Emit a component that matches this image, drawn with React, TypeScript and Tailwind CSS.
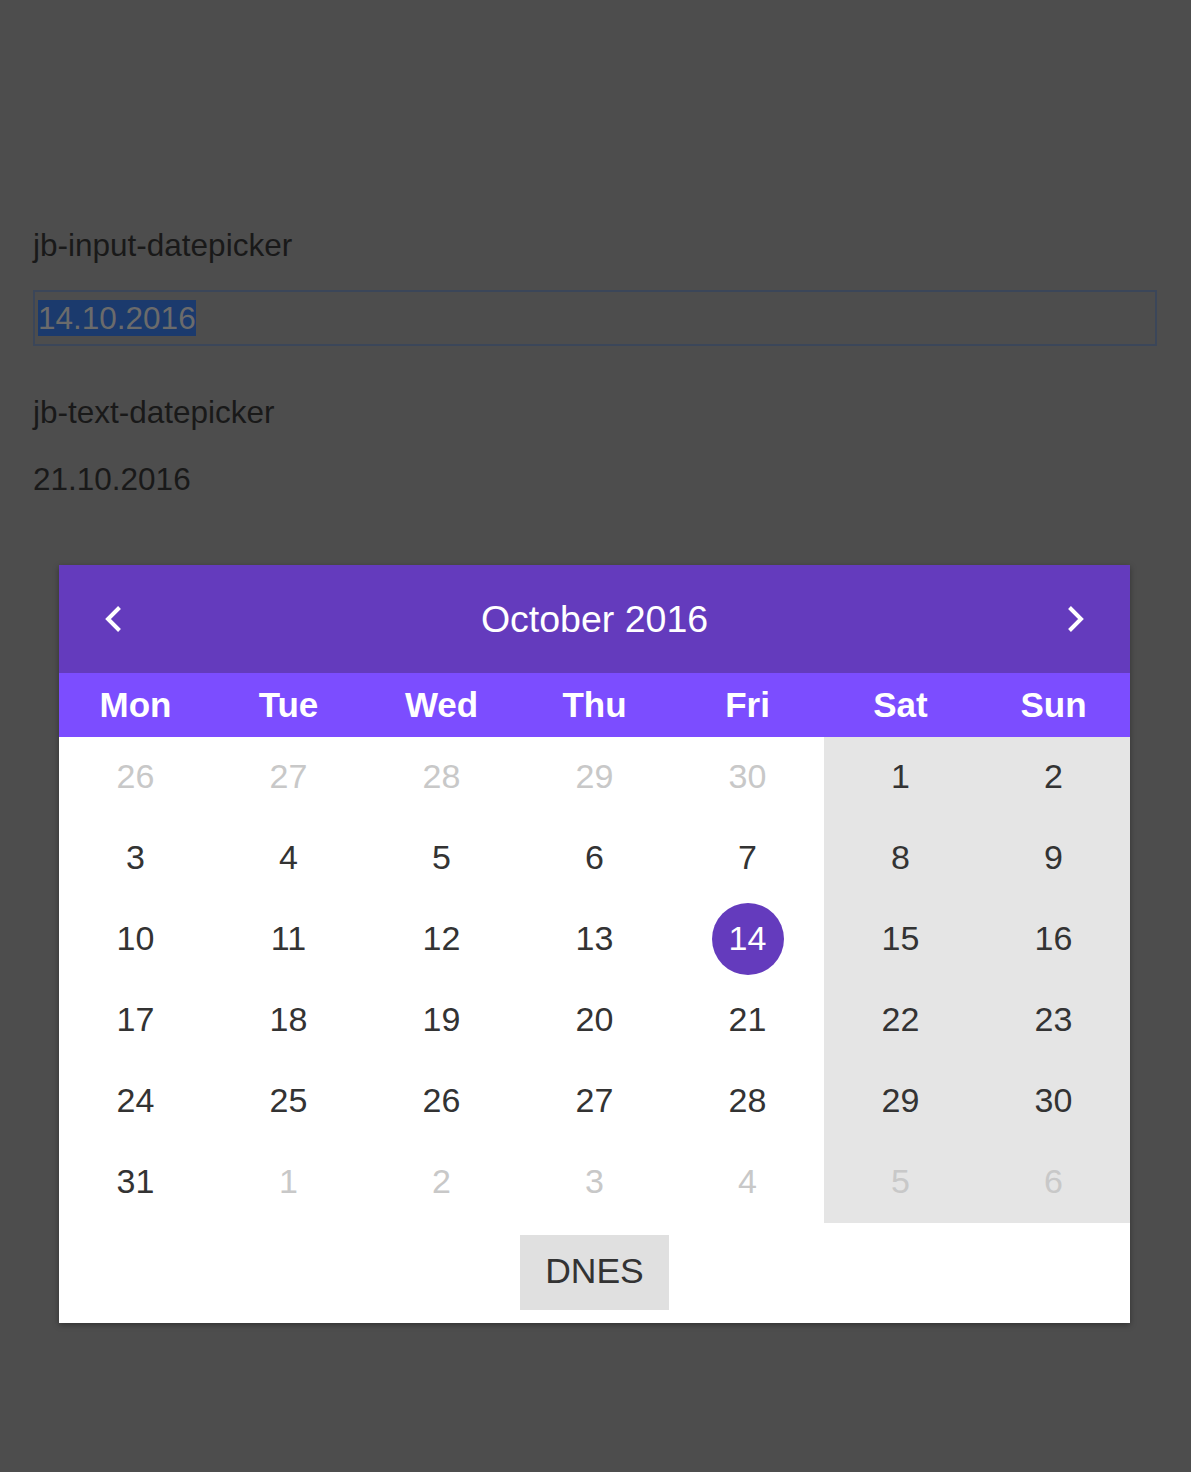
import React from "react";

const DAYS = ["Mon", "Tue", "Wed", "Thu", "Fri", "Sat", "Sun"];

type Cell = { d: number; other?: boolean };

const WEEKS: Cell[][] = [
  [{ d: 26, other: true }, { d: 27, other: true }, { d: 28, other: true }, { d: 29, other: true }, { d: 30, other: true }, { d: 1 }, { d: 2 }],
  [3, 4, 5, 6, 7, 8, 9].map((d) => ({ d })),
  [10, 11, 12, 13, 14, 15, 16].map((d) => ({ d })),
  [17, 18, 19, 20, 21, 22, 23].map((d) => ({ d })),
  [24, 25, 26, 27, 28, 29, 30].map((d) => ({ d })),
  [{ d: 31 }, { d: 1, other: true }, { d: 2, other: true }, { d: 3, other: true }, { d: 4, other: true }, { d: 5, other: true }, { d: 6, other: true }],
];

function Chevron({ dir }: { dir: "left" | "right" }) {
  return (
    <svg width="20" height="30" viewBox="0 0 20 30" fill="none">
      <path
        d={dir === "left" ? "M16.5 3.5 L5 15 L16.5 26.5" : "M3.5 3.5 L15 15 L3.5 26.5"}
        stroke="white"
        strokeWidth="4"
        strokeLinecap="butt"
        strokeLinejoin="miter"
      />
    </svg>
  );
}

export default function App() {
  const font = { fontFamily: '"Liberation Sans", Arial, sans-serif' };

  return (
    <div className="min-h-[1472px] w-full bg-[#4d4d4d] text-[31.5px] text-[#191919]" style={font}>
      <div className="px-[33px] pt-[227px]">
        <div className="leading-[36px]">jb-input-datepicker</div>
        <div className="mt-[27px] flex h-[56px] w-[1124px] items-center border-2 border-[#3b4659] pl-[3px]">
          <span className="bg-[#1b3a6d] leading-[36px] text-[#6b6b6b]">14.10.2016</span>
        </div>
        <div className="mt-[48px] leading-[36px]">jb-text-datepicker</div>
        <div className="mt-[31px] leading-[36px]">21.10.2016</div>
      </div>

      <div className="ml-[59px] mt-[68px] w-[1071px] bg-white shadow-[0_2px_6px_rgba(0,0,0,0.35)]">
        <div className="flex h-[108px] items-center justify-between bg-[#643bbd] px-[44px]">
          <Chevron dir="left" />
          <div className="text-[37.5px] text-white">October 2016</div>
          <Chevron dir="right" />
        </div>

        <div className="grid h-[64px] grid-cols-7 items-center bg-[#7c4dff]">
          {DAYS.map((d) => (
            <div key={d} className="text-center text-[35px] font-bold text-white">
              {d}
            </div>
          ))}
        </div>

        <div>
          {WEEKS.map((week, wi) => (
            <div key={wi} className="grid h-[81px] grid-cols-7">
              {week.map((c, ci) => {
                const weekend = ci >= 5;
                const selected = !c.other && c.d === 14;
                return (
                  <div
                    key={ci}
                    className={`flex items-center justify-center pb-[2px] text-[34px] ${weekend ? "bg-[#e5e5e5]" : "bg-white"} ${c.other ? "text-[#c8c8c8]" : "text-[#333333]"}`}
                  >
                    {selected ? (
                      <span className="flex h-[72px] w-[72px] items-center justify-center rounded-full bg-[#643bbd] text-white">
                        {c.d}
                      </span>
                    ) : (
                      c.d
                    )}
                  </div>
                );
              })}
            </div>
          ))}
        </div>

        <div className="flex justify-center pb-[13px] pt-[12px]">
          <button className="flex h-[75px] w-[149px] items-center justify-center bg-[#e0e0e0] pb-[2px] text-[35.5px] text-[#333333]">
            DNES
          </button>
        </div>
      </div>
    </div>
  );
}
